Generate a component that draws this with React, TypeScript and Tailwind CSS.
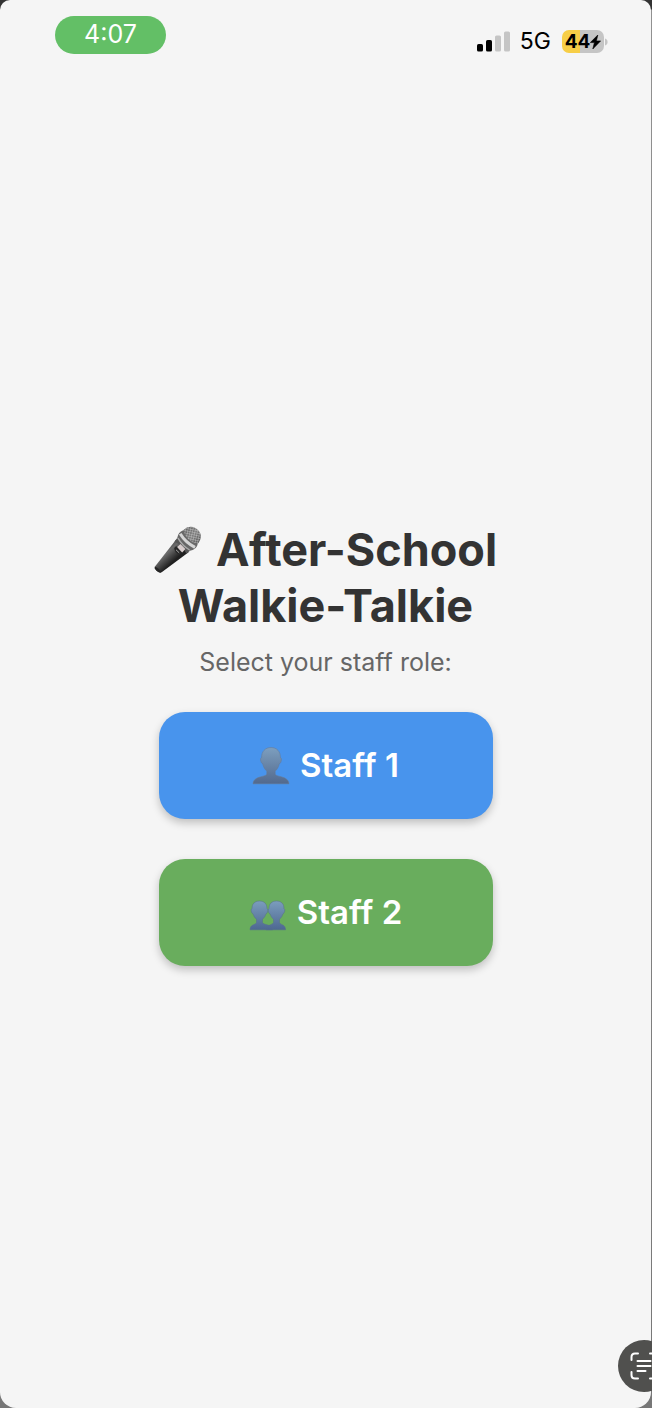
import React from "react";

function SignalIcon() {
  return (
    <svg width="33" height="21" viewBox="0 0 33 21" aria-hidden="true">
      <rect x="0" y="13" width="6" height="7.5" rx="1.6" fill="#000" />
      <rect x="9" y="9" width="6" height="11.5" rx="1.6" fill="#000" />
      <rect x="18" y="4.5" width="6" height="16" rx="1.6" fill="#c5c5c5" />
      <rect x="27" y="0.5" width="6" height="20" rx="1.6" fill="#c5c5c5" />
    </svg>
  );
}

function Battery() {
  return (
    <div className="flex items-center gap-px">
      <div className="flex h-[23px] w-[42px] items-center justify-center rounded-[7px] bg-[linear-gradient(90deg,#f7ce46_18px,#c5c5c5_18px)] text-[19px] leading-none font-bold">
        <span>44</span>
        <svg width="11" height="14" viewBox="0 0 11 14" aria-hidden="true">
          <path d="M7.8 0 0.3 7.6h4.1L2.8 14 10.6 5.9H6.4Z" fill="#000" stroke="#000" strokeWidth="0.6" />
        </svg>
      </div>
      <svg width="3" height="8" viewBox="0 0 3 8" aria-hidden="true">
        <path d="M0 0.5C1.6 1 2.6 2.3 2.6 4S1.6 7 0 7.5Z" fill="#c5c5c5" />
      </svg>
    </div>
  );
}

function MicrophoneIcon() {
  return (
    <svg width="48" height="48" viewBox="0 0 48 48" aria-hidden="true">
      <defs>
        <linearGradient id="mic-body" gradientUnits="userSpaceOnUse" x1="12" y1="20" x2="23" y2="32">
          <stop offset="0" stopColor="#444" />
          <stop offset="0.35" stopColor="#6c6c6c" />
          <stop offset="0.65" stopColor="#484848" />
          <stop offset="1" stopColor="#202020" />
        </linearGradient>
        <linearGradient id="mic-head" x1="0" y1="0" x2="1" y2="1">
          <stop offset="0" stopColor="#606060" />
          <stop offset="0.5" stopColor="#808080" />
          <stop offset="1" stopColor="#444" />
        </linearGradient>
        <pattern id="mic-mesh" width="2.4" height="2.4" patternUnits="userSpaceOnUse" patternTransform="rotate(12)">
          <path d="M0 0H2.4M0 0V2.4" stroke="#d0d0d0" strokeWidth="0.7" />
        </pattern>
      </defs>
      <path d="M0.8 40.8 22 13.8 34.6 26.2 7.7 46.2Q5.2 47.5 2.3 44.6Q0 42.2 0.8 40.8Z" fill="url(#mic-body)" />
      <path d="M0.8 40.8Q3 41.2 4.8 43Q6.6 44.8 7 46.6Q4.8 47.2 2.3 44.6Q0 42.2 0.8 40.8Z" fill="#252525" />
      <path d="M20.5 15.4 23.2 12 36 24.8 32.4 27.8Q30.2 20.6 20.5 15.4Z" fill="#555" />
      <path d="M29.2 4.2Q35-1.5 41.8 2.2Q49 7 46 14.2Q43.6 20 36.8 21.8Q27 17.2 29.2 4.2Z" fill="url(#mic-head)" />
      <path d="M29.2 4.2Q35-1.5 41.8 2.2Q49 7 46 14.2Q43.6 20 36.8 21.8Q27 17.2 29.2 4.2Z" fill="url(#mic-mesh)" />
      <path d="M29.2 4.2Q24.2 6 23.2 12Q28 20.8 36 24.8Q41.8 23.6 43.8 18.4Q32.4 15.4 29.2 4.2Z" fill="#686868" />
      <path d="M26.2 7.8Q31.4 16.5 41 21.4" stroke="#d5d5d5" strokeWidth="3" fill="none" />
      <path d="M24 12.2Q28.6 20.3 35.6 24" stroke="#aaa" strokeWidth="1.4" fill="none" />
      <path d="m23 21.2 3.4-3.2 5 5-3.2 3.4Z" fill="#d8cdcd" />
      <path d="m20.2 22.1 2-2 5.3 6.3-2.2 2Q20.6 27.2 20.2 22.1Z" fill="#292929" />
      <path d="m22 23.8 3.2 3" stroke="#aaa" strokeWidth="1" />
    </svg>
  );
}

function PersonIcon() {
  return (
    <svg width="38" height="38" viewBox="0 0 38 38" aria-hidden="true">
      <defs>
        <linearGradient id="person-fill" x1="0" y1="0" x2="0" y2="1">
          <stop offset="0" stopColor="#7d9fbf" />
          <stop offset="1" stopColor="#52698d" />
        </linearGradient>
      </defs>
      <path
        d="M19 0.5C25 0.5 28.6 4.8 28.4 10.6C30.2 10.8 29.4 16.4 27.3 16.7C26.6 20.1 25.2 22.4 23.2 24.1V27.2C24.4 30.2 36.8 28.8 37 36.8H1C1.2 28.8 13.6 30.2 14.8 27.2V24.1C12.8 22.4 11.4 20.1 10.7 16.7C8.6 16.4 7.8 10.8 9.6 10.6C9.4 4.8 13 0.5 19 0.5Z"
        fill="url(#person-fill)"
        stroke="#687891"
        strokeWidth="0.5"
      />
    </svg>
  );
}

function PeopleIcon() {
  return (
    <svg width="38" height="38" viewBox="0 0 38 38" aria-hidden="true">
      <defs>
        <linearGradient id="people-fill" gradientUnits="userSpaceOnUse" x1="0" y1="7" x2="0" y2="36">
          <stop offset="0" stopColor="#7b9dbd" />
          <stop offset="1" stopColor="#4d6791" />
        </linearGradient>
      </defs>
      <g fill="url(#people-fill)" stroke="#566f8c" strokeWidth="0.5">
        <path d="M27.5 7C32.4 7 35.2 10.2 34.9 14.6C36.6 15 35.6 19.5 34 19.8Q33 23.2 30.5 25.3V28.5C31.3 31.2 36.4 29.9 36.6 35.8H17C18.2 29.9 23.7 31.2 24.5 28.5V25.3Q22 23.2 21 19.8C19.4 19.5 18.4 15 20.1 14.6C19.8 10.2 22.6 7 27.5 7Z" />
        <path d="M10.5 7C15.4 7 18.2 10.2 17.9 14.6C19.6 15 18.6 19.5 17 19.8Q16 23.2 13.5 25.3V28.5C14.3 31.2 23.4 29.9 23.6 35.8H1C1.2 29.9 6.7 31.2 7.5 28.5V25.3Q5 23.2 4 19.8C2.4 19.5 1.4 15 3.1 14.6C2.8 10.2 5.6 7 10.5 7Z" />
      </g>
    </svg>
  );
}

function ScanTextIcon() {
  return (
    <svg width="28" height="28" viewBox="0 0 28 28" fill="none" stroke="#fff" strokeWidth="2" strokeLinecap="round" aria-hidden="true">
      <path d="M1.5 8V5Q1.5 1.5 5 1.5H8M20 1.5H23Q26.5 1.5 26.5 5V8M26.5 20V23Q26.5 26.5 23 26.5H20M8 26.5H5Q1.5 26.5 1.5 23V20M7.5 9H20.5M7.5 14H20.5M7.5 19H15.5" />
    </svg>
  );
}

type RoleButtonProps = { label: string; icon: React.ReactNode; color: string };

function RoleButton({ label, icon, color }: RoleButtonProps) {
  return (
    <button
      type="button"
      className={`flex w-full items-center justify-center gap-2.5 rounded-[26px] py-8 text-[33px] leading-[43px] font-semibold text-white shadow-[0_4px_9px_rgba(0,0,0,0.22)] ${color}`}
    >
      {icon}
      <span>{label}</span>
    </button>
  );
}

export default function App() {
  return (
    <div className="min-h-screen bg-[linear-gradient(#333_0,#333_9px,#919191_10px,#777_100%)] pr-px font-['Inter','Liberation_Sans',sans-serif]">
      <div className="flex min-h-screen flex-col rounded-t-[10px] rounded-b-[16px] bg-[#f5f5f5]">
        <header className="flex h-20 items-start justify-between pt-4 pr-[43px] pl-[55px]">
          <time className="flex h-[38px] w-[111px] items-center justify-center rounded-full bg-[#63bf66] text-[25px] text-white">
            4:07
          </time>
          <div className="flex h-[51px] items-center text-black">
            <SignalIcon />
            <span className="mr-[11px] ml-2.5 text-[23px]">5G</span>
            <Battery />
          </div>
        </header>
        <main className="flex flex-1 flex-col items-center justify-center">
          <h1 className="text-center text-[45px] leading-[56px] font-bold text-[#333]">
            <span className="flex items-center justify-center gap-3.5">
              <MicrophoneIcon />
              After-School
            </span>
            Walkie-Talkie
          </h1>
          <p className="mt-3 text-[25px] leading-8 text-[#666]">Select your staff role:</p>
          <div className="mt-[34px] flex w-[334px] max-w-full flex-col gap-10">
            <RoleButton label="Staff 1" icon={<PersonIcon />} color="bg-[#4894ed]" />
            <RoleButton label="Staff 2" icon={<PeopleIcon />} color="bg-[#69ad5d]" />
          </div>
        </main>
      </div>
      <div className="pointer-events-none fixed right-0 bottom-4 h-[52px] w-[34px] overflow-hidden">
        <button
          type="button"
          aria-label="Scan text"
          className="pointer-events-auto flex size-[52px] items-center justify-center rounded-full bg-[#50504e]"
        >
          <ScanTextIcon />
        </button>
      </div>
    </div>
  );
}
